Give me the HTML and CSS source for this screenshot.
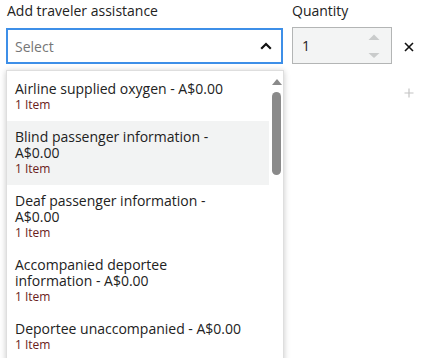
FILE: index.html
```html
<!DOCTYPE html>
<html>
<head>
<meta charset="utf-8">
<link rel="stylesheet" href="styles.css">
</head>
<body>
<div class="row">
  <div class="field field-main">
    <div class="label">Add traveler assistance</div>
    <div class="select">
      <span class="placeholder">Select</span>
      <svg class="chev" width="12" height="8" viewBox="0 0 12 8"><path d="M1.2 6.8 L6 2 L10.8 6.8" fill="none" stroke="#111" stroke-width="2.2"/></svg>
    </div>
  </div>
  <div class="field field-qty">
    <div class="label">Quantity</div>
    <div class="qty">
      <span class="qty-val">1</span>
      <span class="spin">
        <svg width="12" height="24" viewBox="0 0 12 24"><path d="M0.5 6 L6 0.5 L11.5 6 Z" fill="#c9cbcb"/><path d="M0.5 19 L6 24 L11.5 19 Z" fill="#c9cbcb"/></svg>
      </span>
    </div>
  </div>
  <div class="actions">
    <svg class="x" width="10" height="10" viewBox="0 0 10 10"><path d="M1 1 L9 9 M9 1 L1 9" stroke="#111" stroke-width="1.6"/></svg>
    <svg class="plus" width="10" height="10" viewBox="0 0 10 10"><path d="M5 0.5 V9.5 M0.5 5 H9.5" stroke="#c4c4c4" stroke-width="1.2"/></svg>
  </div>
</div>
<div class="dropdown">
  <ul class="list">
    <li class="item"><div class="title">Airline supplied oxygen - A$0.00</div><div class="sub">1 Item</div></li>
    <li class="item active"><div class="title">Blind passenger information - A$0.00</div><div class="sub">1 Item</div></li>
    <li class="item"><div class="title">Deaf passenger information - A$0.00</div><div class="sub">1 Item</div></li>
    <li class="item"><div class="title">Accompanied deportee information - A$0.00</div><div class="sub">1 Item</div></li>
    <li class="item"><div class="title">Deportee unaccompanied - A$0.00</div><div class="sub">1 Item</div></li>
  </ul>
  <div class="scrollbar">
    <span class="sb-arrow"></span>
    <span class="sb-thumb"></span>
  </div>
</div>
</body>
</html>
```
FILE: styles.css
```css
* { box-sizing: border-box; }
html, body { margin: 0; padding: 0; background: #fff; }
body {
  font-family: "Open Sans", "Noto Sans", sans-serif;
  color: #222;
  width: 428px;
  height: 358px;
  overflow: hidden;
  position: relative;
}
.row {
  display: flex;
  padding-left: 6px;
  gap: 9px;
}
.label {
  font-size: 14px;
  line-height: 20px;
  height: 20px;
  margin: 1px 0 7px 1px;
  color: #222;
}
.field-main { width: 277px; }
.select {
  height: 36px;
  border: 2px solid #3d8fe8;
  display: flex;
  align-items: center;
  justify-content: space-between;
  padding: 0 9px 0 7px;
}
.placeholder { font-size: 14px; color: #767676; }
.chev { display: block; }
.field-qty { width: 100px; }
.field-qty .label { margin-left: 0; }
.qty {
  height: 37px;
  margin-top: -1px;
  border: 1px solid #b3b5b5;
  background: #f3f4f4;
  display: flex;
  align-items: center;
  justify-content: space-between;
  padding: 0 11px 0 9px;
  font-size: 14px;
}
.spin svg { display: block; }
.actions {
  display: flex;
  flex-direction: column;
  align-items: center;
  padding-top: 42px;
  gap: 36px;
  margin-left: 3px;
}
.actions svg { display: block; }
.dropdown {
  position: absolute;
  left: 6px;
  top: 70px;
  width: 278px;
  height: 300px;
  background: #fff;
  border: 1px solid #dedede;
  box-shadow: 0 1px 6px rgba(0,0,0,0.22);
  display: flex;
}
.list {
  list-style: none;
  margin: 0;
  padding: 2px 0 0;
  width: 262px;
}
.item {
  padding: 8px 25px 8px 8px;
}
.item.active { background: #f2f3f3; }
.title { font-size: 14px; line-height: 16px; color: #222; }
.sub { font-size: 12px; line-height: 16px; color: #6a1c1c; }
.scrollbar {
  flex: 1;
  position: relative;
}
.sb-arrow {
  position: absolute;
  left: 3px;
  top: 8px;
  width: 0; height: 0;
  border-left: 5px solid transparent;
  border-right: 5px solid transparent;
  border-bottom: 6px solid #8a8a8a;
}
.sb-thumb {
  position: absolute;
  left: 3px;
  top: 21px;
  width: 9px;
  height: 83px;
  border-radius: 5px;
  background: #8a8a8a;
}
```
